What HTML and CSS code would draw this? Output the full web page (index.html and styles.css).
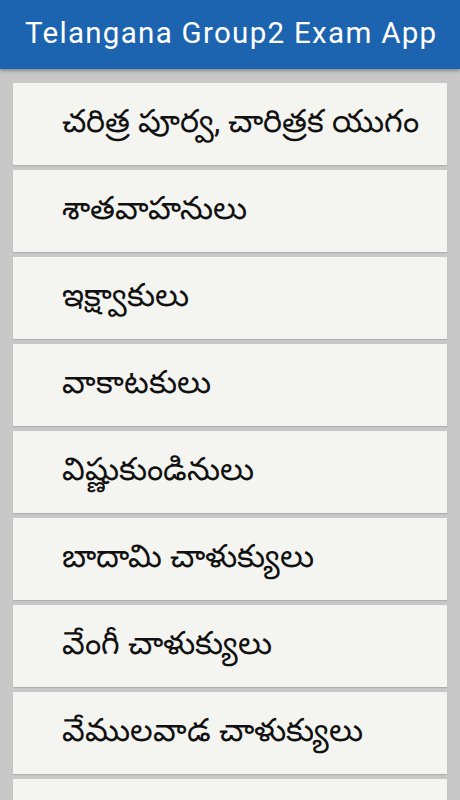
FILE: index.html
```html
<!DOCTYPE html>
<html lang="te">
<head>
<meta charset="utf-8">
<link rel="stylesheet" href="styles.css">
</head>
<body>
<header class="appbar"><h1 class="title">Telangana Group2 Exam App</h1></header>
<main class="list">
  <div class="item">చరిత్ర పూర్వ, చారిత్రక యుగం</div>
  <div class="item">శాతవాహనులు</div>
  <div class="item">ఇక్ష్వాకులు</div>
  <div class="item">వాకాటకులు</div>
  <div class="item">విష్ణుకుండినులు</div>
  <div class="item">బాదామి చాళుక్యులు</div>
  <div class="item">వేంగీ చాళుక్యులు</div>
  <div class="item">వేములవాడ చాళుక్యులు</div>
  <div class="item"></div>
</main>
</body>
</html>
```
FILE: styles.css
```css
html, body { margin: 0; padding: 0; }
body {
  width: 460px;
  height: 800px;
  overflow: hidden;
  background: #c8c8c8;
  font-family: Roboto, "Noto Sans", sans-serif;
}
.appbar {
  height: 69px;
  background: #1c64b0;
  display: flex;
  align-items: center;
  padding-left: 25px;
  box-shadow: 0 2px 3px rgba(0,0,0,0.3);
  position: relative;
  z-index: 1;
}
.title {
  margin: 0;
  color: #ffffff;
  font-size: 29.5px;
  font-weight: 400;
  letter-spacing: 1.3px;
  line-height: 1;
  padding-bottom: 1px;
  white-space: nowrap;
}
.list {
  display: flex;
  flex-direction: column;
  gap: 5px;
  padding: 14px 13px 0;
}
.item {
  height: 82px;
  flex: none;
  background: #f4f4f0;
  box-shadow: 0 1px 1px rgba(0,0,0,0.12);
  display: flex;
  align-items: center;
  padding-left: 49px;
  font-size: 32px;
  color: #111111;
  white-space: nowrap;
}
```
